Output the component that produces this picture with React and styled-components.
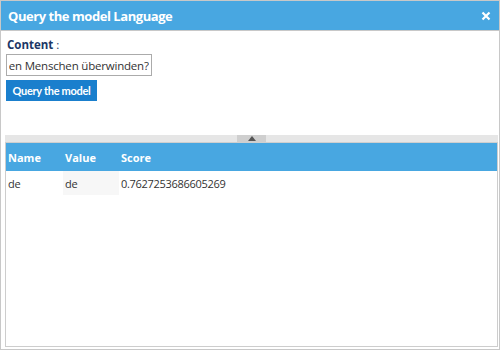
import React, { useLayoutEffect, useRef } from "react"
import styled, { createGlobalStyle } from "styled-components"

const Global = createGlobalStyle`
    html, body { margin: 0; padding: 0; background: #fff; }
    body { font-family: "Open Sans", "Liberation Sans", sans-serif; }
    * { box-sizing: border-box; }
`

const Dialog = styled.div`
    width: 500px;
    height: 350px;
    border: 1px solid #c8c8c8;
    display: flex;
    flex-direction: column;
    background: #fff;
`

const TitleBar = styled.div`
    height: 30px;
    background: #48a7e1;
    border-bottom: 1px solid #c8c8c8;
    display: flex;
    align-items: center;
    justify-content: space-between;
    padding: 0 8px 0 7px;
    color: #fff;
`

const Title = styled.h1`
    margin: 0;
    font-size: 13px;
    font-weight: 700;
    letter-spacing: -0.45px;
`

const Close = styled.button`
    border: none;
    background: none;
    padding: 0;
    width: 10px;
    height: 10px;
    display: flex;
    cursor: pointer;
`

const Body = styled.div`
    padding: 6px 1px 0 4px;
    display: flex;
    flex-direction: column;
    flex: 1;
`

const Label = styled.label`
    font-size: 11.5px;
    font-weight: 700;
    color: #1c3766;
    margin-left: 2px;
    line-height: 16px;
`

const Colon = styled.span`
    font-weight: 400;
    margin-left: 3px;
`

const Input = styled.input`
    margin-top: 1px;
    margin-left: 1px;
    width: 146px;
    height: 22px;
    border: 1px solid #ababab;
    padding: 0 2px;
    font-family: inherit;
    font-size: 11.5px;
    letter-spacing: -0.2px;
    color: #333;
    outline: none;
`

const Button = styled.button`
    margin-top: 4px;
    margin-left: 1px;
    align-self: flex-start;
    width: 91px;
    height: 21px;
    padding: 0;
    background: #1a7fcd;
    color: #fff;
    border: none;
    font-family: "Lato", "Open Sans", sans-serif;
    font-size: 11px;
    font-weight: 700;
    letter-spacing: -0.3px;
`

const Splitter = styled.div`
    margin-top: 34px;
    height: 8px;
    background: #e6e6e6;
    border-bottom: 1px solid #cfcfcf;
    display: flex;
    justify-content: center;
`

const Handle = styled.div`
    width: 29px;
    height: 7px;
    background: #cfcfcf;
    display: flex;
    align-items: center;
    justify-content: center;
`

const Panel = styled.div`
    flex: 1;
    border: 1px solid #cdcdcd;
    border-top: none;
    margin-bottom: 2px;
`

const Table = styled.table`
    width: 100%;
    border-collapse: collapse;
    font-size: 11px;
`

const Head = styled.th`
    background: #48a7e1;
    color: #fff;
    font-weight: 700;
    text-align: left;
    height: 28px;
    padding: 0 0 0 2px;
    width: ${p => p.$w || "auto"};
`

const Cell = styled.td`
    height: 24px;
    padding: 0 0 0 2px;
    color: #333;
    letter-spacing: -0.3px;
    background: ${p => (p.$shade ? "#f7f7f7" : "#fff")};
`

export default function App() {
    const ref = useRef(null)
    useLayoutEffect(() => {
        if (ref.current) ref.current.scrollLeft = 9999
    }, [])
    return (
        <>
            <Global />
            <Dialog>
                <TitleBar>
                    <Title>Query the model Language</Title>
                    <Close aria-label="close">
                        <svg width="10" height="10" viewBox="0 0 10 10">
                            <path d="M1.5 1.5 L8.5 8.5 M8.5 1.5 L1.5 8.5" stroke="#fff" strokeWidth="2.2" />
                        </svg>
                    </Close>
                </TitleBar>
                <Body>
                    <Label>
                        Content<Colon>:</Colon>
                    </Label>
                    <Input ref={ref} readOnly value="Kann die Sprache den Menschen überwinden?" />
                    <Button>Query the model</Button>
                    <Splitter>
                        <Handle>
                            <svg width="8" height="5" viewBox="0 0 8 5">
                                <path d="M0 5 L4 0 L8 5 Z" fill="#555" />
                            </svg>
                        </Handle>
                    </Splitter>
                    <Panel>
                        <Table>
                            <thead>
                                <tr>
                                    <Head $w="57px">Name</Head>
                                    <Head $w="56px">Value</Head>
                                    <Head>Score</Head>
                                </tr>
                            </thead>
                            <tbody>
                                <tr>
                                    <Cell>de</Cell>
                                    <Cell $shade>de</Cell>
                                    <Cell>0.7627253686605269</Cell>
                                </tr>
                            </tbody>
                        </Table>
                    </Panel>
                </Body>
            </Dialog>
        </>
    )
}
